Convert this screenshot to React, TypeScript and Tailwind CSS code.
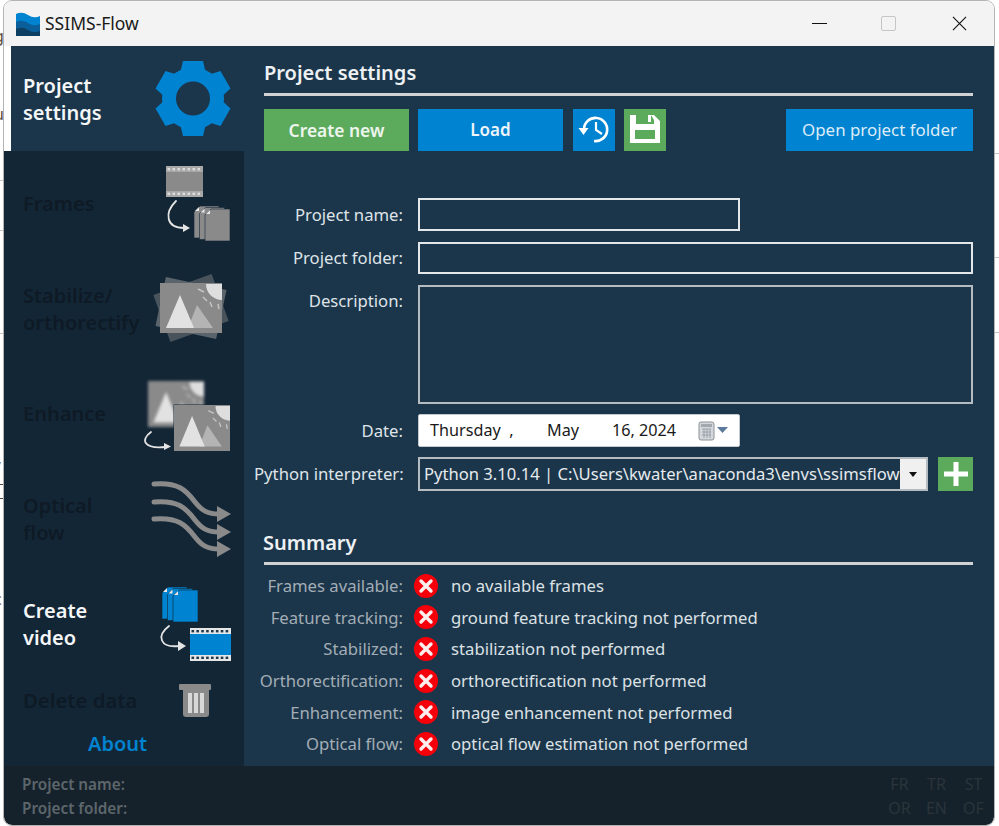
import React from 'react';

const GRAY = '#8a8a8a';
const BLUE = '#0083d0';

// Sidebar icons are drawn in an svg covering the right part of each nav row
function Pages({ x, y, color }: { x: number; y: number; color: string }) {
  const page = (px: number, py: number) => (
    <g key={px}>
      <path d={`M${px + 6} ${py}H${px + 25}V${py + 32}H${px}V${py + 6}Z`} fill={color} stroke="#132636" strokeWidth="0.6" />
      <path d={`M${px + 1} ${py + 5}L${px + 5} ${py + 1}V${py + 5}Z`} fill="#e8e8e8" />
    </g>
  );
  return <g>{[page(x, y), page(x + 5.5, y + 1.5), page(x + 11, y + 3)]}</g>;
}

function Film({ x, y, w, h, color, light }: { x: number; y: number; w: number; h: number; color: string; light?: boolean }) {
  const count = Math.floor(w / 5);
  const holes = Array.from({ length: count }, (_, i) => x + 1.5 + (i * (w - 2)) / count);
  const band = light ? '#e6e6e6' : '#a8a8a8';
  const hole = light ? '#20384c' : '#dcdcdc';
  return (
    <g>
      <rect x={x} y={y} width={w} height={h} fill={band} />
      <rect x={x} y={y + 6} width={w} height={h - 12} fill={color} />
      {holes.map((hx) => (
        <g key={hx}>
          <rect x={hx} y={y + 2} width="2.6" height="2.4" fill={hole} />
          <rect x={hx} y={y + h - 4.4} width="2.6" height="2.4" fill={hole} />
        </g>
      ))}
    </g>
  );
}

function Picture({ x, y, w, h, blur }: { x: number; y: number; w: number; h: number; blur?: boolean }) {
  const s = w / 62;
  const sy = h / 50;
  return (
    <g transform={`translate(${x} ${y}) scale(${s} ${sy})`} style={blur ? { filter: 'blur(1.5px)' } : undefined}>
      <rect width="62" height="50" fill={GRAY} />
      <path d="M62 1V17A16 16 0 0 1 46 1Z" fill="#dedede" />
      <path d="M38 6L44 9M43 14L47 18M50 19L52 24M58 21L59 26" stroke="#c4c4c4" strokeWidth="1.5" />
      <path d="M37 22L53 45H28Z" fill="#b4b4b4" />
      <path d="M20 12L34 45H6Z" fill="#e2e2e2" />
    </g>
  );
}

function Arrow({ d, head }: { d: string; head: string }) {
  return (
    <g>
      <path d={d} fill="none" stroke="#e4e4e4" strokeWidth="1.8" strokeLinecap="round" />
      <path d={head} fill="#e4e4e4" />
    </g>
  );
}

function Gear() {
  const teeth = [0, 60, 120, 180, 240, 300];
  return (
    <svg width="90" height="105" viewBox="150 46 90 105">
      {teeth.map((a) => (
        <path key={a} d="M183 61H203L207 78H179Z" fill={BLUE} transform={`rotate(${a} 193 98.5)`} />
      ))}
      <circle cx="193" cy="98.5" r="24" fill="none" stroke={BLUE} strokeWidth="14" />
    </svg>
  );
}

function FramesIcon() {
  return (
    <svg width="90" height="105" viewBox="150 151 90 105">
      <Film x={166} y={166} w={37} h={31} color={GRAY} />
      <Arrow d="M176 201C164 213 166 228 184 228" head="M183 224L190 228L183 232Z" />
      <Pages x={194} y={206} color={GRAY} />
    </svg>
  );
}

function StabilizeIcon() {
  return (
    <svg width="90" height="105" viewBox="150 256 90 105">
      <rect x="160" y="283" width="62" height="50" fill="#565f66" opacity="0.8" transform="rotate(-20 191 308)" />
      <rect x="160" y="283" width="62" height="50" fill="#6d7478" opacity="0.8" transform="rotate(12 191 308)" />
      <Picture x={160} y={283} w={62} h={50} />
    </svg>
  );
}

function EnhanceIcon() {
  return (
    <svg width="100" height="105" viewBox="140 361 100 105">
      <Picture x={148} y={381} w={56} h={46} blur />
      <rect x="173.5" y="404.5" width="57" height="47" fill="#132636" />
      <Picture x={174} y={405} w={56} h={46} />
      <Arrow d="M151 432C140 440 144 449 165 447" head="M164 443L171 446.5L164 450Z" />
    </svg>
  );
}

function FlowIcon() {
  const offsets = [0, 18, 35];
  return (
    <svg width="90" height="105" viewBox="150 466 90 105">
      {offsets.map((o) => (
        <g key={o} transform={`translate(0 ${o})`}>
          <path d="M154 484C178 482 186 490 195 502C202 511 208 514 219 514" fill="none" stroke={GRAY} strokeWidth="5" strokeLinecap="round" />
          <path d="M217 506L231 514L217 522Z" fill={GRAY} />
        </g>
      ))}
    </svg>
  );
}

function VideoIcon() {
  return (
    <svg width="90" height="105" viewBox="150 571 90 105">
      <Pages x={162} y={587} color={BLUE} />
      <Arrow d="M169 626C156 636 160 648 179 646" head="M178 641L186 646L178 651Z" />
      <Film x={190} y={628} w={41} h={33} color={BLUE} light />
    </svg>
  );
}

function TrashIcon() {
  return (
    <svg width="90" height="48" viewBox="150 676 90 48">
      <rect x="179" y="684" width="32" height="6" rx="1" fill={GRAY} />
      <path d="M183 690H209V714Q209 717 206 717H186Q183 717 183 714Z" fill={GRAY} />
      <rect x="188" y="693" width="4" height="20" fill="#d8d8d8" />
      <rect x="194" y="693" width="4" height="20" fill="#d8d8d8" />
      <rect x="200" y="693" width="4" height="20" fill="#d8d8d8" />
    </svg>
  );
}

function NavItem({ lines, active, children }: { lines: string[]; active?: boolean; children: React.ReactNode }) {
  return (
    <div className="flex h-[105px] items-center justify-between pl-[19px] pr-[4px]">
      <div className={`text-[20px] leading-[27px] font-semibold ${active ? 'text-[#f4f6f8]' : 'text-[#0e1a25]'}`}>
        {lines.map((l) => (
          <div key={l}>{l}</div>
        ))}
      </div>
      {children}
    </div>
  );
}

function Sidebar() {
  return (
    <div className="w-[240px] shrink-0 bg-[#132636]">
      <div className="bg-white pl-[7px]">
        <div className="flex h-[105px] items-center justify-between bg-[#1b364b] pl-[12px] pr-[4px]">
          <div className="text-[20px] leading-[27px] font-semibold text-[#f4f6f8]">
            <div>Project</div>
            <div>settings</div>
          </div>
          <Gear />
        </div>
      </div>
      <NavItem lines={['Frames']}><FramesIcon /></NavItem>
      <NavItem lines={['Stabilize/', 'orthorectify']}><StabilizeIcon /></NavItem>
      <NavItem lines={['Enhance']}><EnhanceIcon /></NavItem>
      <NavItem lines={['Optical', 'flow']}><FlowIcon /></NavItem>
      <NavItem lines={['Create', 'video']} active><VideoIcon /></NavItem>
      <div className="flex h-[48px] items-center justify-between pl-[19px] pr-[4px]">
        <div className="text-[20.3px] font-semibold text-[#0e1a25]">Delete data</div>
        <TrashIcon />
      </div>
      <div className="flex h-[40px] items-center pl-[84px] text-[20px] font-semibold text-[#0083d0]">About</div>
    </div>
  );
}

function Label({ children }: { children: React.ReactNode }) {
  return <div className="-ml-[10px] w-[149px] shrink-0 whitespace-nowrap text-right text-[16.7px] text-[#dfe4e8]">{children}</div>;
}

function ActionButton({ color, className, children }: { color: 'green' | 'blue'; className: string; children: React.ReactNode }) {
  return (
    <button className={`flex h-[42px] items-center justify-center ${color === 'green' ? 'bg-[#5cab5c]' : 'bg-[#0083d0]'} ${className}`}>
      {children}
    </button>
  );
}

function XIcon() {
  return (
    <svg width="24" height="24" viewBox="0 0 24 24" className="shrink-0">
      <circle cx="12" cy="12" r="12" fill="#f5000a" />
      <path d="M7 7L17 17M17 7L7 17" stroke="#fdeeee" strokeWidth="3.4" strokeLinecap="round" />
    </svg>
  );
}

const summary = [
  ['Frames available:', 'no available frames'],
  ['Feature tracking:', 'ground feature tracking not performed'],
  ['Stabilized:', 'stabilization not performed'],
  ['Orthorectification:', 'orthorectification not performed'],
  ['Enhancement:', 'image enhancement not performed'],
  ['Optical flow:', 'optical flow estimation not performed'],
];

function Main() {
  return (
    <div className="min-w-0 flex-1 bg-[#1b364b] pl-[20px] pr-[21px]">
      <div className="flex h-[47px] items-center pt-[7px] text-[20px] font-semibold text-[#eef1f3]">Project settings</div>
      <div className="h-[3px] bg-[#d0d2d4]" />

      <div className="mt-[13px] flex">
        <ActionButton color="green" className="w-[145px] text-[17.400px] font-semibold text-[#eef5ee]">Create new</ActionButton>
        <ActionButton color="blue" className="ml-[9px] w-[145px] text-[17px] font-semibold text-[#eef5fb]">Load</ActionButton>
        <ActionButton color="blue" className="ml-[10px] w-[42px]">
          <svg width="42" height="42" viewBox="0 0 42 42">
            <path d="M11 20A11.6 11.6 0 1 1 21 32" fill="none" stroke="#fff" strokeWidth="2.6" />
            <path d="M5.5 19H15.5L10.5 26Z" fill="#fff" />
            <path d="M23 13V21L29 25" fill="none" stroke="#fff" strokeWidth="2.2" />
          </svg>
        </ActionButton>
        <ActionButton color="green" className="ml-[9px] w-[42px]">
          <svg width="42" height="42" viewBox="0 0 42 42">
            <path
              fillRule="evenodd"
              d="M6 6H30L36 12V34H6ZM12 6V15H30V11L27 6V13H24V6ZM11 21V30H31V21Z"
              fill="#fff"
            />
          </svg>
        </ActionButton>
        <ActionButton color="blue" className="ml-auto w-[187px] text-[16.900px] text-[#dcecf8]">Open project folder</ActionButton>
      </div>

      <div className="mt-[47px] flex h-[33px] items-center">
        <Label>Project name:</Label>
        <div className="ml-[15px] h-full w-[322px] border-2 border-[#e4e7ea]" />
      </div>
      <div className="mt-[11px] flex h-[32px] items-center">
        <Label>Project folder:</Label>
        <div className="ml-[15px] h-full flex-1 border-2 border-[#e4e7ea]" />
      </div>
      <div className="mt-[11px] flex h-[119px] items-start">
        <div className="pt-[3px]"><Label>Description:</Label></div>
        <div className="ml-[15px] h-full flex-1 border-2 border-[#b4bbc1]" />
      </div>
      <div className="mt-[10px] flex h-[33px] items-center">
        <Label>Date:</Label>
        <div className="ml-[15px] flex h-full w-[322px] items-center rounded-[2px] border border-[#c4c9cd] bg-white text-[16.2px] text-[#1a1a1a]">
          <span className="ml-[11px] w-[117px]">Thursday&nbsp; ,</span>
          <span className="w-[65px]">May</span>
          <span className="w-[87px]">16, 2024</span>
          <svg width="32" height="20" viewBox="0 0 32 20" className="-ml-[1px]">
            <rect x="1" y="1" width="15" height="18" rx="2" fill="#d4d8dc" stroke="#8c9296" />
            <rect x="3" y="3" width="11" height="3" fill="#a2a8ae" />
            <path d="M4 8H13M4 11H13M4 14H13M6 8V17M9 8V17M12 8V17" stroke="#9096a0" strokeWidth="0.8" />
            <path d="M19 6H30L24.500 12Z" fill="#5b7a9c" />
          </svg>
        </div>
      </div>
      <div className="mt-[10px] flex h-[34px] items-center">
        <Label>Python interpreter:</Label>
        <div className="ml-[15px] flex h-full w-[510px] border-2 border-[#b4bbc1]">
          <div className="min-w-0 flex-1 whitespace-nowrap pl-[4px] text-[16.6px] leading-[30px] text-[#e6eaed]">
            Python 3.10.14 | C:\Users\kwater\anaconda3\envs\ssimsflow
          </div>
          <div className="flex w-[26px] items-center justify-center bg-[#f0f0f0]">
            <svg width="8" height="5" viewBox="0 0 8 5"><path d="M0 0H8L4 5Z" fill="#111" /></svg>
          </div>
        </div>
        <button className="ml-[10px] flex h-full w-[35px] items-center justify-center bg-[#5cab5c]">
          <svg width="26" height="26" viewBox="0 0 26 26"><path d="M13 1V25M1 13H25" stroke="#fff" strokeWidth="5" /></svg>
        </button>
      </div>

      <div className="mt-[33px] flex h-[38px] items-center -ml-px text-[20px] font-semibold text-[#eef1f3]">Summary</div>
      <div className="h-[3px] bg-[#d0d2d4]" />
      <div className="mt-[5px]">
        {summary.map(([k, v]) => (
          <div key={k} className="flex h-[31.6px] items-center">
            <div className="-ml-[10px] w-[149px] shrink-0 whitespace-nowrap text-right text-[16.7px] text-[#a3adb5]">{k}</div>
            <div className="ml-[11px]"><XIcon /></div>
            <div className="ml-[13px] text-[16.7px] text-[#dce1e4]">{v}</div>
          </div>
        ))}
      </div>
    </div>
  );
}

function Footer() {
  const flags = ['FR', 'TR', 'ST', 'OR', 'EN', 'OF'];
  return (
    <div className="flex h-[59px] items-center justify-between rounded-b-[8px] bg-[#16222b] pl-[18px] pr-[2px]">
      <div className="text-[15.3px] leading-[24px] font-semibold text-[#5d666b]">
        <div>Project name:</div>
        <div>Project folder:</div>
      </div>
      <div className="grid grid-cols-[37px_37px_37px] text-center text-[16px] leading-[24px] text-[#2a343a]">
        {flags.map((f) => (
          <div key={f}>{f}</div>
        ))}
      </div>
    </div>
  );
}

export default function App() {
  return (
    <div className="relative h-[826px] w-[999px] overflow-hidden bg-white pl-[3px] font-['Noto_Sans',sans-serif]">
      {/* bits of the desktop windows behind */}
      <div className="absolute left-0 top-[180px] h-px w-[4px] bg-[#c4c4c4]" />
      <div className="absolute left-0 top-[230px] h-px w-[4px] bg-[#c4c4c4]" />
      <div className="absolute left-0 top-[333px] h-px w-[4px] bg-[#c4c4c4]" />
      <div className="absolute left-0 top-[484px] h-px w-[4px] bg-[#444]" />
      <div className="absolute left-0 top-[498px] h-px w-[4px] bg-[#444]" />
      <div className="absolute right-0 top-[153px] h-px w-[4px] bg-[#c4c4c4]" />
      <div className="absolute right-0 top-[257px] h-px w-[4px] bg-[#c4c4c4]" />
      <div className="absolute right-0 top-[332px] h-px w-[4px] bg-[#c4c4c4]" />
      <span className="absolute left-[-6px] top-[24px] text-[16px] text-[#5a4a3a]">g</span>
      <span className="absolute left-[-6px] top-[102px] text-[16px] text-[#5a4a3a]">u</span>
      <span className="absolute left-[-5px] top-[456px] text-[16px] text-[#7a5a3a]">/</span>
      <span className="absolute left-[-6px] top-[587px] text-[16px] text-[#7a5a3a]">c</span>

      <div className="relative flex h-[826px] w-[992px] flex-col overflow-hidden rounded-[9px] border border-[#b4b4b4] bg-[#f3f3f3]">
        <div className="flex h-[45px] shrink-0 items-center bg-[#f3f3f3]">
          <svg width="24" height="24" viewBox="0 0 24 24" className="ml-[12px]">
            <rect width="24" height="24" fill="#0083d0" />
            <path d="M0 2Q6 -1 12 3T24 4V0H0Z" fill="#f3f3f3" />
            <path d="M0 10Q6 7 12 11T24 12V24H0Z" fill="#0a5f9a" />
            <path d="M0 17Q6 14 12 18T24 19V24H0Z" fill="#0d3f63" />
          </svg>
          <span className="ml-[5px] text-[17.500px] text-[#1a1a1a]">SSIMS-Flow</span>
          <div className="ml-auto flex items-center">
            <div className="h-px w-[15px] bg-[#111]" />
            <div className="ml-[54px] h-[15px] w-[15px] rounded-[2px] border border-[#c6c6c6]" />
            <svg width="15" height="15" viewBox="0 0 16 16" className="ml-[56px] mr-[27px]">
              <path d="M1 1L15 15M15 1L1 15" stroke="#111" strokeWidth="1.2" />
            </svg>
          </div>
        </div>
        <div className="flex flex-1">
          <Sidebar />
          <Main />
        </div>
        <Footer />
      </div>
    </div>
  );
}
